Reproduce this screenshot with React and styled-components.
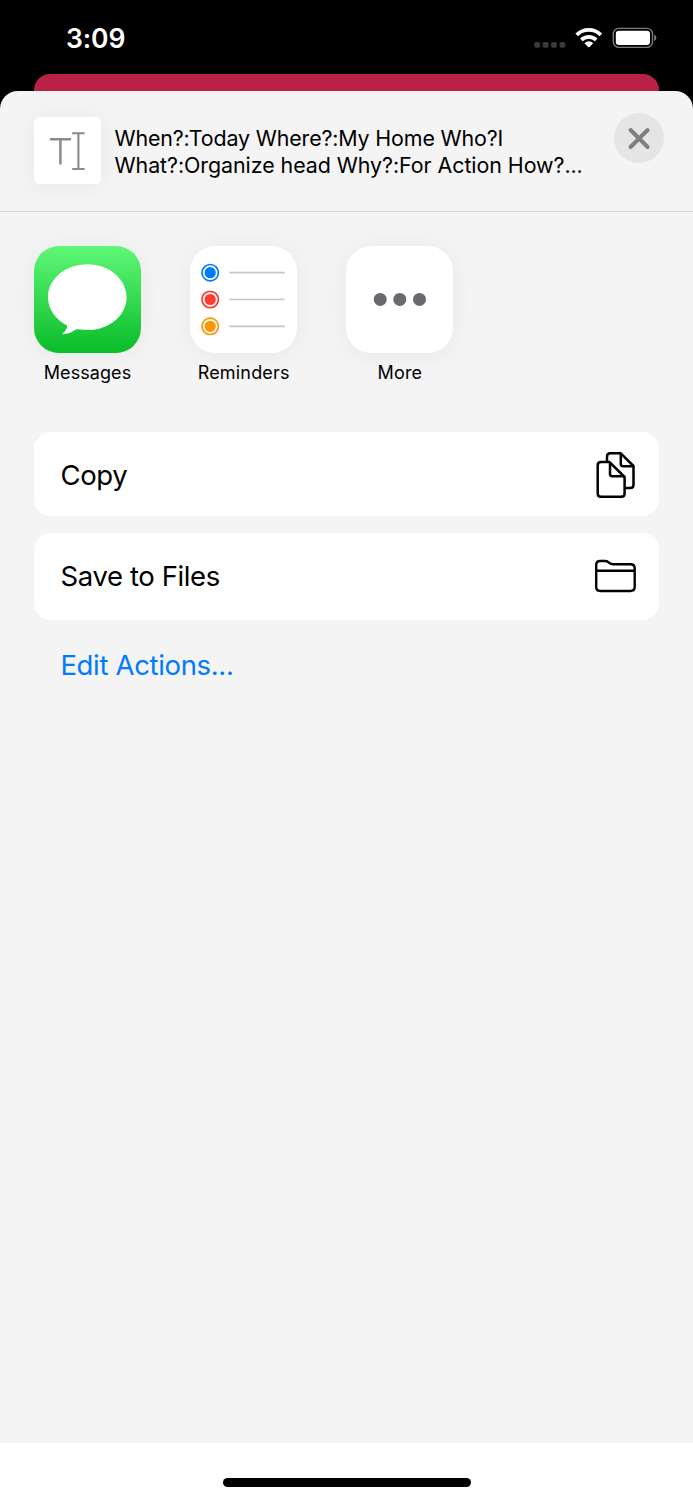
import React from 'react';
import styled, { createGlobalStyle } from 'styled-components';

const Global = createGlobalStyle`
  * { box-sizing: border-box; }
  body { margin: 0; background: #000; }
`;

const Screen = styled.main`
  width: 693px;
  height: 1500px;
  display: flex;
  flex-direction: column;
  overflow: hidden;
  background: #000;
  color: #000;
  font-family: Inter, "Liberation Sans", sans-serif;
`;

const StatusBar = styled.div`
  height: 74px;
  flex: none;
  display: flex;
  justify-content: space-between;
  align-items: flex-start;
  padding: 22px 36px 0 66px;
  color: #fff;
`;

const Clock = styled.time`
  font-size: 26.5px;
  line-height: 32px;
  font-weight: 600;
  letter-spacing: -0.1px;
`;

const StatusIcons = styled.svg`
  width: 124px;
  height: 32px;
  display: block;
`;

const BackCard = styled.div`
  height: 17px;
  flex: none;
  margin: 0 34px;
  border-radius: 16px 16px 0 0;
  background: #b92246;
`;

const Sheet = styled.section`
  height: 1352px;
  flex: none;
  display: flex;
  flex-direction: column;
  border-radius: 18px 18px 0 0;
  background: #f4f4f4;
`;

const Header = styled.header`
  height: 121px;
  flex: none;
  display: flex;
  align-items: flex-start;
  padding: 0 29px 0 34px;
  border-bottom: 1px solid #d2d2d3;
`;

const Thumb = styled.div`
  width: 67px;
  height: 67px;
  flex: none;
  margin-top: 26px;
  border-radius: 5px;
  background: #fff;
  box-shadow: 0 2px 24px rgba(0, 0, 0, 0.06);
`;

const Summary = styled.p`
  flex: 1;
  margin: 34px 0 0 13.5px;
  font-size: 21.4px;
  line-height: 27px;
  white-space: nowrap;
`;

const SummaryLine = styled.span`
  display: block;
  letter-spacing: ${(p) => p.$tracking}px;
`;

const CloseButton = styled.button`
  width: 50px;
  height: 50px;
  flex: none;
  margin: 22.4px 0 0;
  padding: 0;
  border: 0;
  border-radius: 50%;
  background: #e5e5e6;
`;

const Drawing = styled.svg`
  display: block;
  width: ${(p) => p.$w}px;
  height: ${(p) => p.$h}px;
`;

const AppRow = styled.div`
  display: flex;
  gap: 49.2px;
  padding: 34px 34px 0;
`;

const AppItem = styled.div`
  width: 107px;
  display: flex;
  flex-direction: column;
  align-items: center;
`;

const AppTile = styled.div`
  width: 107px;
  height: 107px;
  border-radius: 25px;
  overflow: hidden;
  background: ${(p) => p.$fill || '#fff'};
  box-shadow: 0 2px 26px rgba(0, 0, 0, 0.055);
`;

const AppLabel = styled.span`
  margin-top: 8px;
  font-size: 18px;
  line-height: 24px;
  letter-spacing: ${(p) => p.$tracking}px;
  white-space: nowrap;
`;

const Actions = styled.div`
  display: flex;
  flex-direction: column;
  gap: 17px;
  margin-top: 47px;
  padding: 0 34px;
`;

const ActionRow = styled.div`
  height: ${(p) => p.$height}px;
  display: flex;
  align-items: center;
  justify-content: space-between;
  padding: ${(p) => p.$top || 0}px 23px ${(p) => p.$bottom || 0}px 26.6px;
  border-radius: 17px;
  background: #fff;
`;

const ActionText = styled.span`
  font-size: 27.5px;
  line-height: 34px;
  letter-spacing: -0.4px;
`;

const EditLink = styled.a`
  align-self: flex-start;
  margin: 11px 0 0 26.4px;
  color: #007aff;
  font-size: 27.5px;
  line-height: 34px;
  letter-spacing: -0.33px;
`;

const HomeArea = styled.footer`
  height: 57px;
  flex: none;
  display: flex;
  justify-content: center;
  padding-top: 35px;
  background: #fff;
`;

const HomeIndicator = styled.div`
  width: 248px;
  height: 8.5px;
  border-radius: 5px;
  background: #000;
`;

function StatusGlyphs() {
  return (
    <StatusIcons viewBox="533 22 124 32">
      <g fill="#3a3a3a">
        {[534.3, 542.7, 551.1, 559.5].map((x) => (
          <rect key={x} x={x} y="42" width="5.8" height="5.8" rx="1.8" />
        ))}
      </g>
      <g fill="none" stroke="#fff" strokeWidth="3.7">
        <path d="M576.7 34.9a17.1 17.1 0 0 1 24.2 0" />
        <path d="M581.4 39.9a10.5 10.5 0 0 1 14.8 0" />
      </g>
      <path d="M584.4 43.2a6.2 6.2 0 0 1 8.8 0L589.5 47q-.7.7-1.4 0Z" fill="#fff" />
      <rect x="613.3" y="28.4" width="39.2" height="19" rx="5.7" fill="none" stroke="#7b7b7b" strokeWidth="1.4" />
      <rect x="615.8" y="30.8" width="34.2" height="14.2" rx="3.3" fill="#fff" />
      <path d="M654.2 34.5q2.2.8 2.2 3.3t-2.2 3.3Z" fill="#7b7b7b" />
    </StatusIcons>
  );
}

const reminders = [
  { y: 26.7, color: '#007aff' },
  { y: 53.5, color: '#ff3b30' },
  { y: 80.3, color: '#ff9500' },
];

export default function App() {
  return (
    <Screen>
      <Global />
      <StatusBar>
        <Clock>3:09</Clock>
        <StatusGlyphs />
      </StatusBar>
      <BackCard />
      <Sheet>
        <Header>
          <Thumb>
            <Drawing $w={67} $h={67} viewBox="0 0 67 67" fill="none" stroke="#8a8a8a" strokeLinecap="round">
              <path d="M17 22.3h19M26.4 22.3v24.3" strokeWidth="2.5" />
              <path d="M39 16.2h10.8M39 52h10.8M44.4 16.2V52" strokeWidth="2.1" />
            </Drawing>
          </Thumb>
          <Summary>
            <SummaryLine $tracking={-0.14}>When?:Today Where?:My Home Who?I</SummaryLine>
            <SummaryLine $tracking={-0.05}>What?:Organize head Why?:For Action How?...</SummaryLine>
          </Summary>
          <CloseButton aria-label="Close">
            <Drawing $w={50} $h={50} viewBox="0 0 50 50" fill="none" stroke="#7f7f83" strokeWidth="4" strokeLinecap="round">
              <path d="M16.6 17l17 17M33.6 17l-17 17" />
            </Drawing>
          </CloseButton>
        </Header>

        <AppRow>
          <AppItem>
            <AppTile $fill="linear-gradient(#5ff777, #0abc28)">
              <Drawing $w={107} $h={107} viewBox="0 0 107 107" fill="#fff">
                <path d="M53.300 18.200C31.600 18.200 14 32.800 14 51.200c0 11.600 7.200 21.900 18.300 27.800 1.200.8 1.100 1.700.5 3-1.100 2.700-2.700 4.400-4.800 6.200 5 .1 9.800-1.800 13.400-4.400 1-.6 1.900-.8 3.100-.5 2.800.5 5.700.8 8.800.8 21.700 0 39.300-14.600 39.300-32.900S75 18.200 53.300 18.200Z" />
              </Drawing>
            </AppTile>
            <AppLabel $tracking={0.08}>Messages</AppLabel>
          </AppItem>
          <AppItem>
            <AppTile>
              <Drawing $w={107} $h={107} viewBox="0 0 107 107">
                {reminders.map((r) => (
                  <g key={r.color}>
                    <circle cx="20.200" cy={r.y} r="8.2" fill="none" stroke={r.color} strokeWidth="1.7" />
                    <circle cx="20.200" cy={r.y} r="5.6" fill={r.color} />
                    <path d={`M39.300 ${r.y}H94.800`} stroke="#c6c6cb" strokeWidth="1.7" />
                  </g>
                ))}
              </Drawing>
            </AppTile>
            <AppLabel $tracking={0.18}>Reminders</AppLabel>
          </AppItem>
          <AppItem>
            <AppTile>
              <Drawing $w={107} $h={107} viewBox="0 0 107 107" fill="#69696f">
                {[34.2, 53.8, 73.5].map((x) => (
                  <circle key={x} cx={x} cy="53.4" r="6.5" />
                ))}
              </Drawing>
            </AppTile>
            <AppLabel $tracking={0.18}>More</AppLabel>
          </AppItem>
        </AppRow>

        <Actions>
          <ActionRow $height={84} $top={2}>
            <ActionText>Copy</ActionText>
            <Drawing $w={42} $h={48} viewBox="594 451 42 48" fill="none" stroke="#000" strokeWidth="2.5" strokeLinejoin="round">
              <path d="M607 461v-4.500q0-3.300 3.300-3.300H620.500L633.500 466V484.800q0 3.300-3.300 3.300H625" />
              <path d="M620.800 453.500V464q0 2.200 2.200 2.200H633.300" />
              <path d="M601 462.100H609.600L624.600 477V493.400q0 3.300-3.300 3.300H601q-3.300 0-3.300-3.300V465.400q0-3.300 3.300-3.300Z" />
              <path d="M610 462.500V474q0 2.200 2.200 2.200H624" />
            </Drawing>
          </ActionRow>
          <ActionRow $height={87} $bottom={1}>
            <ActionText>Save to Files</ActionText>
            <Drawing $w={42} $h={34} viewBox="594 559.500 42 34" fill="none" stroke="#000" strokeWidth="2.400" strokeLinejoin="round">
              <path d="M596.200 587.500V565.500q0-4 4-4H605q2 0 3.400 1.200l1.400 1.100q1.200.9 3 .9H630.500q4.200 0 4.200 4V587.500q0 4-4.200 4H600.200q-4 0-4-4Z" />
              <path d="M596.200 571.200H634.700" />
            </Drawing>
          </ActionRow>
          <EditLink>Edit Actions...</EditLink>
        </Actions>
      </Sheet>
      <HomeArea>
        <HomeIndicator />
      </HomeArea>
    </Screen>
  );
}
